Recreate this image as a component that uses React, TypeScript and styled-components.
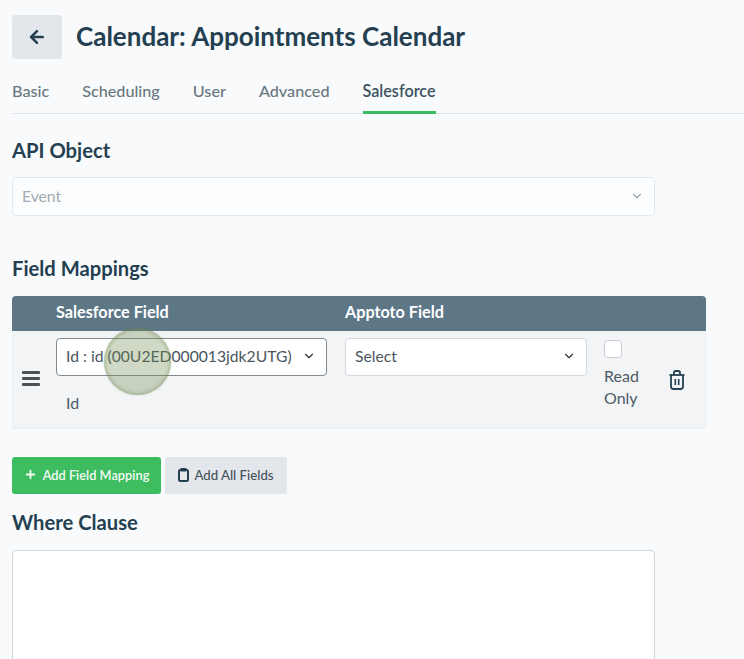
import React from 'react'
import styled, { createGlobalStyle } from 'styled-components'
import { ArrowLeft, ChevronDown, Plus } from 'lucide-react'

const GlobalStyle = createGlobalStyle`
    html, body {
        margin: 0;
        padding: 0;
        height: 659px;
        overflow: hidden;
        background: #f8fafc;
        font-family: "Lato", "Open Sans", sans-serif;
        color: #243f50;
    }
    * { box-sizing: border-box; }
`

const Page = styled.div`
    position: relative;
    height: 659px;
    overflow: hidden;
    padding-top: 15px;
`

const Header = styled.div`
    display: flex;
    align-items: center;
    gap: 14px;
    padding-left: 12px;
    height: 44px;
`

const BackButton = styled.button`
    width: 50px;
    height: 44px;
    border: 0;
    border-radius: 3px;
    background: #e3e7eb;
    color: #243f50;
    display: flex;
    align-items: center;
    justify-content: center;
    padding: 0;
`

const Title = styled.h1`
    margin: 0 0 2px;
    font-size: 26px;
    font-weight: 700;
    color: #243f50;
`

const Tabs = styled.div`
    display: flex;
    gap: 33px;
    height: 55px;
    margin-left: 12px;
    padding-top: 23px;
    border-bottom: 1px solid #e0e4e8;
`

const Tab = styled.div<{ $active?: boolean }>`
    font-size: 16.2px;
    line-height: 18px;
    height: 32px;
    font-weight: ${p => (p.$active ? 600 : 500)};
    color: ${p => (p.$active ? '#3c5361' : '#6a7780')};
    border-bottom: 3px solid ${p => (p.$active ? '#3dbb61' : 'transparent')};
`

const Content = styled.div`
    padding-left: 12px;
`

const Heading = styled.h2<{ $top: number }>`
    margin: ${p => p.$top}px 0 0;
    font-size: 20.2px;
    line-height: 24px;
    font-weight: 700;
    color: #243f50;
`

const SelectBox = styled.div<{ $width: number; $height?: number; $dark?: boolean; $muted?: boolean }>`
    width: ${p => p.$width}px;
    height: ${p => p.$height ?? 39}px;
    display: flex;
    align-items: center;
    justify-content: space-between;
    padding: 0 10px 2px 9px;
    background: ${p => (p.$muted ? '#fcfdfe' : '#ffffff')};
    border: 1px solid ${p => (p.$dark ? '#7f8a92' : p.$muted ? '#e4e8ec' : '#d3d9e2')};
    border-radius: 4px;
    font-size: 15.7px;
    color: ${p => (p.$muted ? '#a3aab0' : '#4a5560')};
`

const ApiSelect = styled(SelectBox)`
    margin-top: 15px;
`

const Table = styled.div`
    width: 694px;
    margin-top: 16px;
`

const TableHead = styled.div`
    display: grid;
    grid-template-columns: 44px 289px 1fr;
    align-items: center;
    height: 35px;
    padding-bottom: 4px;
    background: #5d7787;
    border-radius: 4px 4px 0 0;
    color: #ffffff;
    font-size: 16.2px;
    font-weight: 700;
`

const TableRow = styled.div`
    display: grid;
    grid-template-columns: 43px 289px 242px 1fr;
    height: 98px;
    background: #f2f4f6;
    border: 1px solid #eceff2;
    border-top: 0;
    padding-top: 7px;
`

const DragCell = styled.div`
    display: flex;
    align-items: center;
    padding: 0 0 9px 9px;
    color: #4a5258;
`

const FieldCell = styled.div`
    display: flex;
    flex-direction: column;
`

const FieldName = styled.div`
    margin: 18px 0 0 10px;
    font-size: 16px;
    line-height: 18px;
    color: #4f5b65;
`

const ReadOnlyCell = styled.div`
    display: flex;
    align-items: flex-start;
    padding-left: 17px;
`

const ReadOnly = styled.div`
    font-size: 16px;
    line-height: 22px;
    color: #4f5b65;
    width: 65px;
`

const CheckBox = styled.div`
    width: 18px;
    height: 18px;
    margin: 2px 0 7px;
    background: #ffffff;
    border: 1px solid #c9ced6;
    border-radius: 4px;
`

const TrashWrap = styled.div`
    display: flex;
    align-items: center;
    height: 84px;
    color: #243f50;
`

const ButtonRow = styled.div`
    display: flex;
    gap: 4px;
    margin-top: 28px;
`

const ActionButton = styled.button<{ $primary?: boolean; $width: number }>`
    width: ${p => p.$width}px;
    height: 37px;
    display: flex;
    align-items: center;
    justify-content: center;
    gap: ${p => (p.$primary ? 6 : 5)}px;
    border: 0;
    border-radius: 3px;
    padding: 0 0 2px;
    font-family: inherit;
    font-size: ${p => (p.$primary ? 12.8 : 13.2)}px;
    font-weight: ${p => (p.$primary ? 600 : 500)};
    color: ${p => (p.$primary ? '#f4fbf6' : '#44525c')};
    background: ${p => (p.$primary ? '#3dbd60' : '#e3e6ea')};
`

const TextArea = styled.div`
    width: 643px;
    height: 140px;
    margin-top: 16px;
    background: #ffffff;
    border: 1px solid #cfd6dc;
    border-radius: 4px;
`

const ClickMarker = styled.div`
    position: absolute;
    left: 104px;
    top: 328px;
    width: 67px;
    height: 67px;
    border-radius: 50%;
    background: rgba(112, 140, 78, 0.33);
    box-shadow: inset 0 0 3px 2px rgba(105, 130, 75, 0.3), 0 0 2px rgba(105, 130, 75, 0.35);
`

const DragIcon = () => (
    <svg width="18" height="15" viewBox="0 0 18 15" fill="currentColor">
        <rect x="0" y="0" width="18" height="3" rx="1" />
        <rect x="0" y="6" width="18" height="3" rx="1" />
        <rect x="0" y="12" width="18" height="3" rx="1" />
    </svg>
)

const TrashIcon = () => (
    <svg width="16" height="20" viewBox="0 0 16 20" fill="none" stroke="currentColor" strokeWidth="1.8">
        <path d="M0.5 5h15" />
        <path d="M5 5V2.8C5 1.8 5.7 1 6.7 1h2.6c1 0 1.7 0.8 1.7 1.8V5" />
        <path d="M2 5v11.5C2 18 3 19 4.5 19h7c1.5 0 2.5-1 2.5-2.5V5" />
        <path d="M6.3 9v6M9.7 9v6" strokeWidth="1.6" />
    </svg>
)

const ClipboardIcon = () => (
    <svg width="11" height="14" viewBox="0 0 11 14" fill="none" stroke="#243f50" strokeWidth="2">
        <rect x="1" y="2" width="9" height="11" rx="1.5" />
        <rect x="2.5" y="0.5" width="6" height="2.5" rx="0.8" fill="#243f50" strokeWidth="1" />
    </svg>
)

const App = () => {
    return (
        <Page>
            <GlobalStyle />
            <Header>
                <BackButton>
                    <ArrowLeft size={20} strokeWidth={3} />
                </BackButton>
                <Title>Calendar: Appointments Calendar</Title>
            </Header>
            <Tabs>
                <Tab>Basic</Tab>
                <Tab>Scheduling</Tab>
                <Tab>User</Tab>
                <Tab>Advanced</Tab>
                <Tab $active>Salesforce</Tab>
            </Tabs>
            <Content>
                <Heading $top={24}>API Object</Heading>
                <ApiSelect $width={643} $muted>
                    Event
                    <ChevronDown size={14} color="#9aa3aa" />
                </ApiSelect>
                <Heading $top={40}>Field Mappings</Heading>
                <Table>
                    <TableHead>
                        <span />
                        <span>Salesforce Field</span>
                        <span>Apptoto Field</span>
                    </TableHead>
                    <TableRow>
                        <DragCell>
                            <DragIcon />
                        </DragCell>
                        <FieldCell>
                            <SelectBox $width={271} $height={38} $dark>
                                Id : id (00U2ED000013jdk2UTG)
                                <ChevronDown size={14} color="#333" />
                            </SelectBox>
                            <FieldName>Id</FieldName>
                        </FieldCell>
                        <div>
                            <SelectBox $width={242} $height={38}>
                                Select
                                <ChevronDown size={14} color="#333" />
                            </SelectBox>
                        </div>
                        <ReadOnlyCell>
                            <ReadOnly>
                                <CheckBox />
                                Read
                                <br />
                                Only
                            </ReadOnly>
                            <TrashWrap>
                                <TrashIcon />
                            </TrashWrap>
                        </ReadOnlyCell>
                    </TableRow>
                </Table>
                <ButtonRow>
                    <ActionButton $primary $width={149}>
                        <Plus size={13} strokeWidth={3.4} />
                        Add Field Mapping
                    </ActionButton>
                    <ActionButton $width={122}>
                        <ClipboardIcon />
                        Add All Fields
                    </ActionButton>
                </ButtonRow>
                <Heading $top={16}>Where Clause</Heading>
                <TextArea />
            </Content>
            <ClickMarker />
        </Page>
    )
}

export default App
